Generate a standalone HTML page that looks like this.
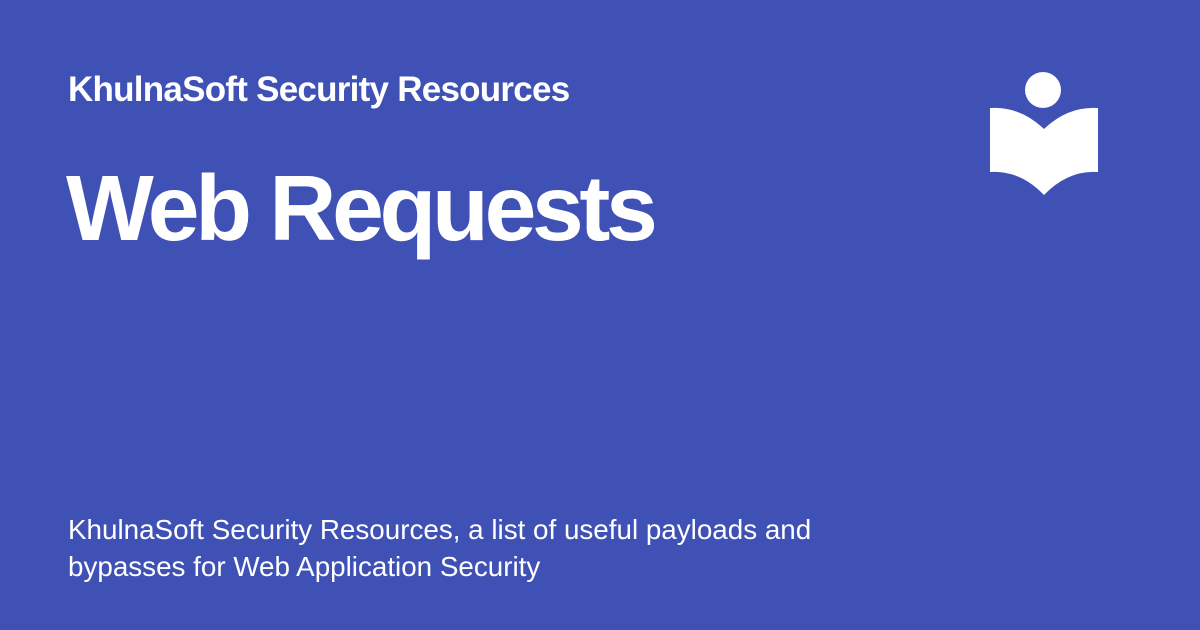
<!DOCTYPE html>
<html><head><meta charset="utf-8"><style>
html,body{margin:0;padding:0}
body{width:1200px;height:630px;background:#3f51b5;position:relative;overflow:hidden;font-family:"Liberation Sans",Arial,sans-serif;color:#fff}
.h{position:absolute;left:68px;top:70px;font-size:35px;font-weight:bold;letter-spacing:-0.75px;white-space:nowrap;line-height:40px}
.t{position:absolute;left:66px;top:158px;font-size:93px;font-weight:bold;letter-spacing:-4.3px;white-space:nowrap;line-height:100px}
.d{position:absolute;left:68px;top:511px;font-size:27.8px;line-height:37px;white-space:nowrap;letter-spacing:0px}
svg{position:absolute;left:0;top:0}
</style></head><body>
<div class="h">KhulnaSoft Security Resources</div>
<div class="t">Web Requests</div>
<div class="d">KhulnaSoft Security Resources, a list of useful payloads and<br>bypasses for Web Application Security</div>
<svg width="1200" height="630"><circle cx="1043" cy="90" r="18" fill="#fff"/>
<path d="M990 108 Q1020 106 1044 129 Q1068 106 1098 108 L1098 172 Q1068 170 1044 195 Q1020 170 990 172 Z" fill="#fff"/></svg>
</body></html>
